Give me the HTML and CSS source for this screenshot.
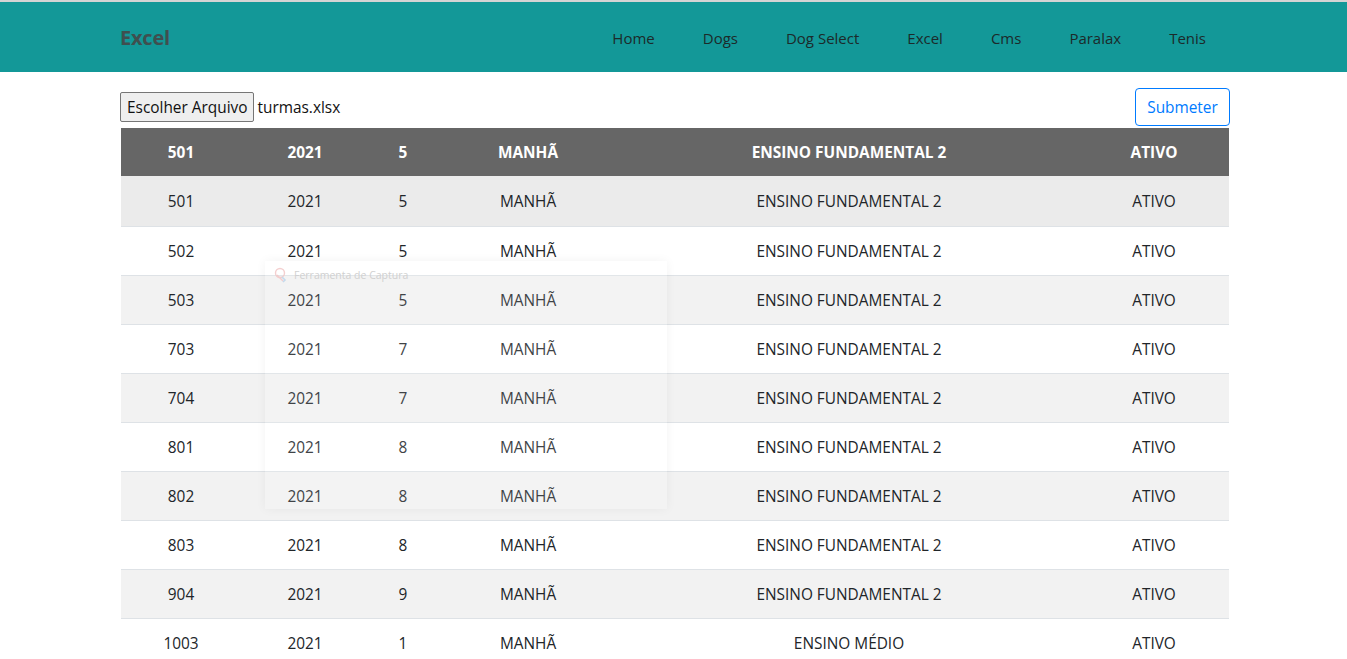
FILE: index.html
```html
<!DOCTYPE html>
<html lang="pt">
<head>
<meta charset="utf-8">
<title>Excel</title>
<link rel="stylesheet" href="styles.css">
</head>
<body>
<header class="navbar">
  <div class="container nav-inner">
    <a class="brand" href="#">Excel</a>
    <ul class="nav-links">
      <li><a href="#">Home</a></li>
      <li><a href="#">Dogs</a></li>
      <li><a href="#">Dog Select</a></li>
      <li><a href="#">Excel</a></li>
      <li><a href="#">Cms</a></li>
      <li><a href="#">Paralax</a></li>
      <li><a href="#">Tenis</a></li>
    </ul>
  </div>
</header>
<main class="container">
  <form class="upload-row">
    <div class="file-field">
      <span class="file-btn">Escolher Arquivo</span>
      <span class="file-name">turmas.xlsx</span>
    </div>
    <button type="button" class="btn-submit">Submeter</button>
  </form>
  <table class="data-table">
    <colgroup>
      <col class="c1"><col class="c2"><col class="c3"><col class="c4"><col class="c5"><col class="c6">
    </colgroup>
    <thead>
      <tr><th>501</th><th>2021</th><th>5</th><th>MANHÃ</th><th>ENSINO FUNDAMENTAL 2</th><th>ATIVO</th></tr>
    </thead>
    <tbody>
      <tr class="hover"><td>501</td><td>2021</td><td>5</td><td>MANHÃ</td><td>ENSINO FUNDAMENTAL 2</td><td>ATIVO</td></tr>
      <tr><td>502</td><td>2021</td><td>5</td><td>MANHÃ</td><td>ENSINO FUNDAMENTAL 2</td><td>ATIVO</td></tr>
      <tr><td>503</td><td>2021</td><td>5</td><td>MANHÃ</td><td>ENSINO FUNDAMENTAL 2</td><td>ATIVO</td></tr>
      <tr><td>703</td><td>2021</td><td>7</td><td>MANHÃ</td><td>ENSINO FUNDAMENTAL 2</td><td>ATIVO</td></tr>
      <tr><td>704</td><td>2021</td><td>7</td><td>MANHÃ</td><td>ENSINO FUNDAMENTAL 2</td><td>ATIVO</td></tr>
      <tr><td>801</td><td>2021</td><td>8</td><td>MANHÃ</td><td>ENSINO FUNDAMENTAL 2</td><td>ATIVO</td></tr>
      <tr><td>802</td><td>2021</td><td>8</td><td>MANHÃ</td><td>ENSINO FUNDAMENTAL 2</td><td>ATIVO</td></tr>
      <tr><td>803</td><td>2021</td><td>8</td><td>MANHÃ</td><td>ENSINO FUNDAMENTAL 2</td><td>ATIVO</td></tr>
      <tr><td>904</td><td>2021</td><td>9</td><td>MANHÃ</td><td>ENSINO FUNDAMENTAL 2</td><td>ATIVO</td></tr>
      <tr><td>1003</td><td>2021</td><td>1</td><td>MANHÃ</td><td>ENSINO MÉDIO</td><td>ATIVO</td></tr>
    </tbody>
  </table>
</main>
<div class="snip-ghost">
  <div class="snip-title">
    <svg class="snip-icon" width="16" height="16" viewBox="0 0 16 16">
      <circle cx="7" cy="6" r="4.5" fill="none" stroke="#f2c4c4" stroke-width="1.4"/>
      <path d="M4 8 L10 14" stroke="#f2c4c4" stroke-width="1.4"/>
      <path d="M9 10 L12 13 L10 15" fill="none" stroke="#b9d4ec" stroke-width="1.6"/>
    </svg>
    <span>Ferramenta de Captura</span>
  </div>
</div>
</body>
</html>
```
FILE: styles.css
```css
* { box-sizing: border-box; }

body {
  margin: 0;
  font-family: "Open Sans", "Noto Sans", sans-serif;
  font-size: 15.4px;
  color: #212529;
  background: #fff;
  position: relative;
}

.container {
  width: 1110px;
  margin-left: 120px;
}

.navbar {
  background: #139898;
  border-top: 2px solid #d4d4d4;
  height: 72px;
}

.nav-inner {
  display: flex;
  align-items: center;
  justify-content: space-between;
  height: 70px;
}

.brand {
  font-weight: 700;
  font-size: 20px;
  color: #3f4f4f;
  text-decoration: none;
  letter-spacing: -0.2px;
}

.nav-links {
  list-style: none;
  margin: 0;
  padding: 0;
  display: flex;
}

.nav-links a {
  display: block;
  padding: 9px 24px 8px;
  color: #1c2a2a;
  text-decoration: none;
  font-size: 15px;
}

.upload-row {
  margin-top: 16px;
  display: flex;
  align-items: center;
  justify-content: space-between;
  height: 38px;
}

.file-field {
  display: flex;
  align-items: center;
  gap: 3px;
}

.file-btn {
  display: inline-block;
  background: #efefef;
  border: 1px solid #767676;
  border-radius: 2px;
  height: 30px;
  line-height: 29px;
  padding: 0 6px;
  color: #111;
}

.file-name {
  color: #111;
  padding-top: 1px;
}

.btn-submit {
  height: 38px;
  width: 95px;
  background: #fff;
  border: 1px solid #007bff;
  border-radius: 4px;
  color: #007bff;
  font-family: inherit;
  font-size: 15.4px;
  padding: 1px 0 0;
}

.data-table {
  margin-top: 2px;
  width: 1108px;
  margin-left: 1px;
  border-collapse: collapse;
  table-layout: fixed;
}

.c1 { width: 120px; }
.c2 { width: 128px; }
.c3 { width: 68px; }
.c4 { width: 182px; }
.c5 { width: 460px; }
.c6 { width: 150px; }

.data-table th {
  background: #666666;
  color: #fff;
  font-weight: 700;
  height: 48px;
  padding: 1px 12px 0;
  text-align: center;
}

.data-table td {
  height: 49px;
  padding: 2px 12px 0;
  text-align: center;
  border-top: 1px solid #dee2e6;
}

.data-table tbody tr:first-child td { border-top: none; height: 50px; }

.data-table tbody tr:nth-child(odd) { background: #f2f2f2; }
.data-table tbody tr.hover { background: #ebebeb; }

.snip-ghost {
  position: absolute;
  top: 261px;
  left: 265px;
  width: 402px;
  height: 248px;
  background: rgba(255, 255, 255, 0.14);
  box-shadow: 0 0 10px rgba(0, 0, 0, 0.05);
}

.snip-title {
  display: flex;
  align-items: center;
  gap: 5px;
  padding: 6px 8px;
  font-size: 10.5px;
  color: #d0d0d0;
}

.snip-icon { opacity: 0.8; }
```
